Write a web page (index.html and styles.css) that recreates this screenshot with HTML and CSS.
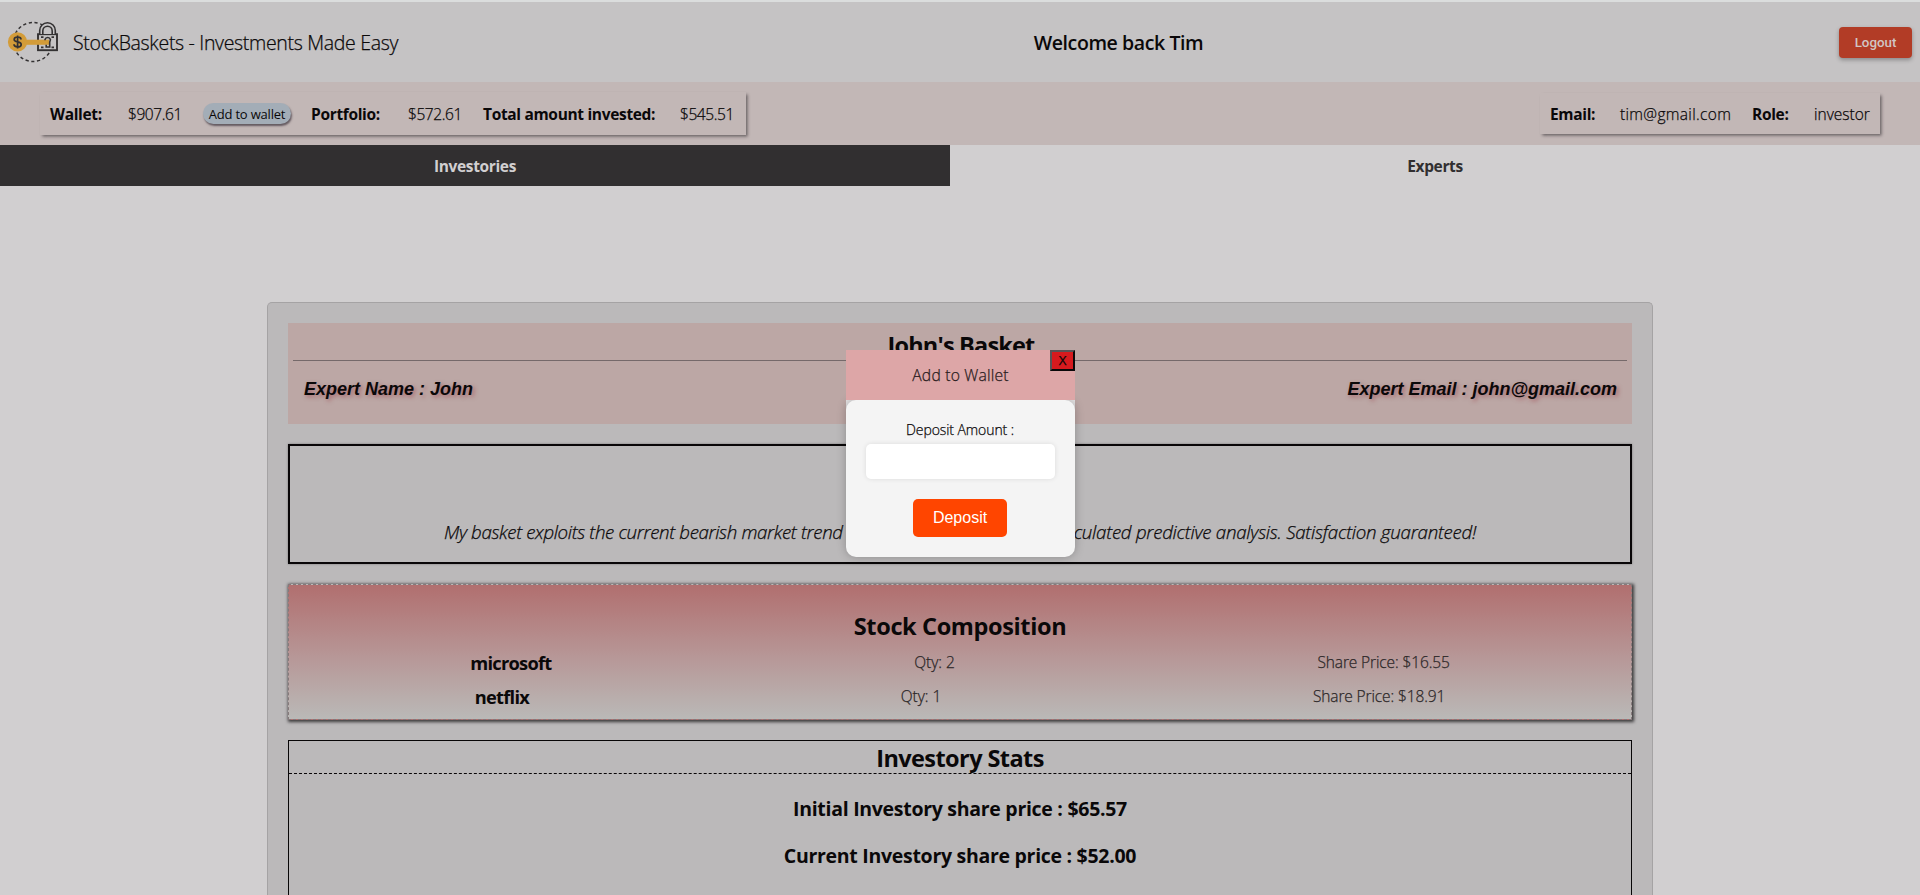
FILE: index.html
```
<!DOCTYPE html>
<html lang="en">
<head>
<meta charset="utf-8">
<title>StockBaskets</title>
<link rel="stylesheet" href="styles.css">
</head>
<body>
<header class="header">
  <div class="brand">
    <svg class="logo" width="60" height="50" viewBox="0 17 60 50" fill="none" stroke="#333132">
      <circle cx="33" cy="42" r="19.500" stroke-width="1.500" stroke-dasharray="3.2 2.6"/>
      <rect x="38" y="34.2" width="19" height="16" fill="#c5c3c4" stroke-width="1.9"/>
      <path d="M39.700 34V30.500a7.800 7.800 0 0 1 15.600 0V34M42.800 34V31a4.700 4.700 0 0 1 9.400 0V34" fill="#c5c3c4" stroke-width="1.600"/>
      <path d="M41 37.200h2.500M51.500 37.200H54M41 47.400h2.500M51.500 47.400H54" stroke-width="1.700"/>
      <path d="M26 39.700H49V44.800H26z" fill="#d39c39" stroke="none"/>
      <circle cx="17.500" cy="41.900" r="9.600" fill="#d39c39" stroke="none"/>
      <path d="M45 40.200V39.500a2.800 2.800 0 0 1 5.400 0c0 1.300-.7 1.700-.7 3V47H46.200V44.800" stroke-width="1.600"/>
      <path d="M21 39.400c0-1.700-1.500-2.400-3.400-2.400s-3.400.8-3.400 2.400c0 3.500 7 1.600 7 5 0 1.600-1.500 2.500-3.600 2.500s-3.600-.9-3.600-2.600M17.600 35.500v13" stroke-width="1.700"/>
    </svg>
    <span class="brand-name">StockBaskets - Investments Made Easy</span>
  </div>
  <span class="welcome">Welcome back Tim</span>
  <button class="logout">Logout</button>
</header>

<section class="account">
  <div class="panel panel-funds">
    <b class="w-wallet">Wallet:</b><span class="money">$907.61</span>
    <button class="add">Add to wallet</button>
    <b class="w-portfolio">Portfolio:</b><span class="money">$572.61</span>
    <b class="w-total">Total amount invested:</b><span class="money">$545.51</span>
  </div>
  <div class="panel panel-user">
    <b class="w-email">Email:</b><span class="email">tim@gmail.com</span>
    <b class="w-role">Role:</b><span class="role">investor</span>
  </div>
</section>

<nav class="tabs">
  <div class="tab tab-active">Investories</div>
  <div class="tab">Experts</div>
</nav>

<main class="card">
  <section class="expert">
    <h2 class="title basket">John's Basket</h2>
    <div class="expert-row"><span>Expert Name : John</span><span>Expert Email : john@gmail.com</span></div>
  </section>
  <section class="about">
    <p class="about-text"><span>My basket exploits the current bearish market trend</span><span class="about-gap"></span><span class="about-end">culated predictive analysis. Satisfaction guaranteed!</span></p>
  </section>
  <section class="stocks">
    <h2 class="title comp">Stock Composition</h2>
    <div class="stock"><b class="stock-name">microsoft</b><span>Qty: 2</span><span class="price">Share Price: $16.55</span></div>
    <div class="stock"><b class="stock-name">netflix</b><span>Qty: 1</span><span class="price">Share Price: $18.91</span></div>
  </section>
  <section class="stats">
    <h2 class="title stats-title">Investory Stats</h2>
    <div class="stats-list">
      <div>Initial Investory share price : $65.57</div>
      <div>Current Investory share price : $52.00</div>
    </div>
  </section>
</main>

<div class="modal">
  <div class="modal-head">Add to Wallet<button class="close">X</button></div>
  <div class="modal-body">
    <label class="label" for="amount">Deposit Amount :</label>
    <input class="amount" id="amount">
    <button class="deposit">Deposit</button>
  </div>
</div>
</body>
</html>
```
FILE: styles.css
```
*{box-sizing:border-box}
body{margin:0;background:#d1cfd0;color:#0a0809;font-family:"Open Sans",sans-serif;font-size:15.5px;position:relative}
h2,p{margin:0}
button,input{padding:0;margin:0;border:0}

.header{height:82px;border-top:2px solid #dbdddd;background:#c5c3c4;display:flex;align-items:center;justify-content:space-between;padding-right:8px}
.brand{display:flex;align-items:center;gap:13px;width:398px}
.logo{flex:none}
.brand-name{font-size:19.5px;font-weight:300;letter-spacing:-.32px;white-space:nowrap;padding-top:1px}
.welcome{font-size:19.5px;font-weight:600;letter-spacing:-.4px;padding-top:1px}
.logout{width:73px;height:31px;border-radius:4px;background:#b23c26;color:#d1c6c4;font:500 13.33px Roboto,sans-serif;box-shadow:0 2px 4px rgba(0,0,0,.3)}

/* slightly firmer strokes for the light weight */
.brand-name,.panel span,.about-text,.stock span,.modal-head,.label{-webkit-text-stroke:.25px currentColor}

.account{height:63px;background:#c2b7b6;display:flex;align-items:center;justify-content:space-between;padding:0 40px}
.panel{display:flex;align-items:center;padding-left:10px;white-space:nowrap;box-shadow:1.5px 1.5px 3px rgba(40,35,40,.6)}
.panel-funds{width:706px;height:43px}
.panel-user{width:340px;height:41px}
.panel b{letter-spacing:-.33px;flex:none}
.panel span{font-weight:300}
.w-wallet{width:78px}
.w-portfolio{width:97px}
.w-total{width:197px}
.w-email{width:70px}
.w-role{width:62px}
.money{width:75px;letter-spacing:-.42px;flex:none}
.email{width:132px;letter-spacing:.33px}
.add{width:88px;height:21px;border-radius:11px;background:#a3adb7;color:#0a0809;font:400 13px "Open Sans",sans-serif;letter-spacing:-.2px;margin-right:20px;flex:none;box-shadow:1px 2px 2px rgba(60,50,60,.7)}

.tabs{display:flex;height:41px;line-height:43px;text-align:center;font-weight:700;letter-spacing:-.36px;color:#312f30}
.tab{width:970px}
.tab-active{width:950px;background:#312f30;color:#d1cfd0}

.card{width:1386px;height:593px;margin:116px auto 0;padding:20px 20px 0;border:1px solid #a5a3a4;border-bottom:0;border-radius:5px 5px 0 0;background:#bbb9ba;display:flex;flex-direction:column;gap:20px}
.title{font-size:23.5px;font-weight:700;line-height:34px;height:32px;text-align:center}
.expert{height:101px;flex:none;background:#bca7a5;padding:5px}
.basket{letter-spacing:-.82px;padding-left:2px}
.expert-row{border-top:1px solid #75696a;padding:0 10px 0 11px;display:flex;justify-content:space-between;font:italic 700 18px/56px "Liberation Sans",sans-serif;text-shadow:2px 2px 4px rgba(150,50,60,.55)}
.about{height:120px;flex:none;border:2px solid #080607;box-shadow:0 0 2px #777;display:flex;align-items:flex-end;justify-content:center;padding-bottom:18px}
.about-text{display:flex;font-size:18.7px;font-style:italic;font-weight:300;line-height:24px;letter-spacing:-.36px;white-space:nowrap}
.about-gap{width:231px}
.about-end{letter-spacing:-.25px}
.stocks{height:136px;flex:none;border:1px dashed #85797b;background-image:linear-gradient(#b16f6f,#b79898 55%,#bab9b7);box-shadow:1px 1px 3px 1px #3c3a3b;padding:24px 0 5px}
.comp{letter-spacing:-.37px;margin-bottom:5px}
.stock{height:34px;display:flex;justify-content:space-around;align-items:center;font-weight:300;color:#2c2728}
.stock span{padding-bottom:2px}
.stock-name{font-size:18.3px;font-weight:700;letter-spacing:-.75px;color:#0a0809;padding-bottom:2px}
.price{letter-spacing:-.12px}
.stats{height:155px;flex:none;border:1px solid #080607;border-bottom:0}
.stats-title{letter-spacing:-.58px;border-bottom:1px dashed #080607;height:33px}
.stats-list{padding-top:11px;text-align:center;font-size:19.5px;font-weight:700;line-height:47px;letter-spacing:-.29px}

.modal{position:absolute;left:846px;top:350px;width:229px;background:linear-gradient(#e4e2e3 75px,transparent 75px)}
.modal-head{height:50px;background:#dda6a7;color:#2b2021;line-height:51px;text-align:center;font-size:15.7px;font-weight:300;letter-spacing:.2px;position:relative}
.close{position:absolute;right:0;top:0;width:25px;height:21px;border:2px solid;border-color:#5a5255 #0a0809 #0a0809 #5a5255;background:#d71a1e;color:#0a0809;font:400 13.33px/17px "Open Sans",sans-serif}
.modal-body{height:157px;border-radius:10px;background:#f4f4f4;padding:20px 21px 20px 20px;display:flex;flex-direction:column;align-items:center;box-shadow:0 0 10px rgba(0,0,0,.25)}
.label{font-size:14px;font-weight:300;line-height:20px;letter-spacing:-.08px}
.amount{width:189px;height:35px;flex:none;margin:4px 0 20px;border-radius:5px;background:#fff;box-shadow:0 0 5px rgba(0,0,0,.1)}
.deposit{width:94px;height:38px;flex:none;border-radius:5px;background:#ff4500;color:#fff;font:16px "Liberation Sans",sans-serif}
```
